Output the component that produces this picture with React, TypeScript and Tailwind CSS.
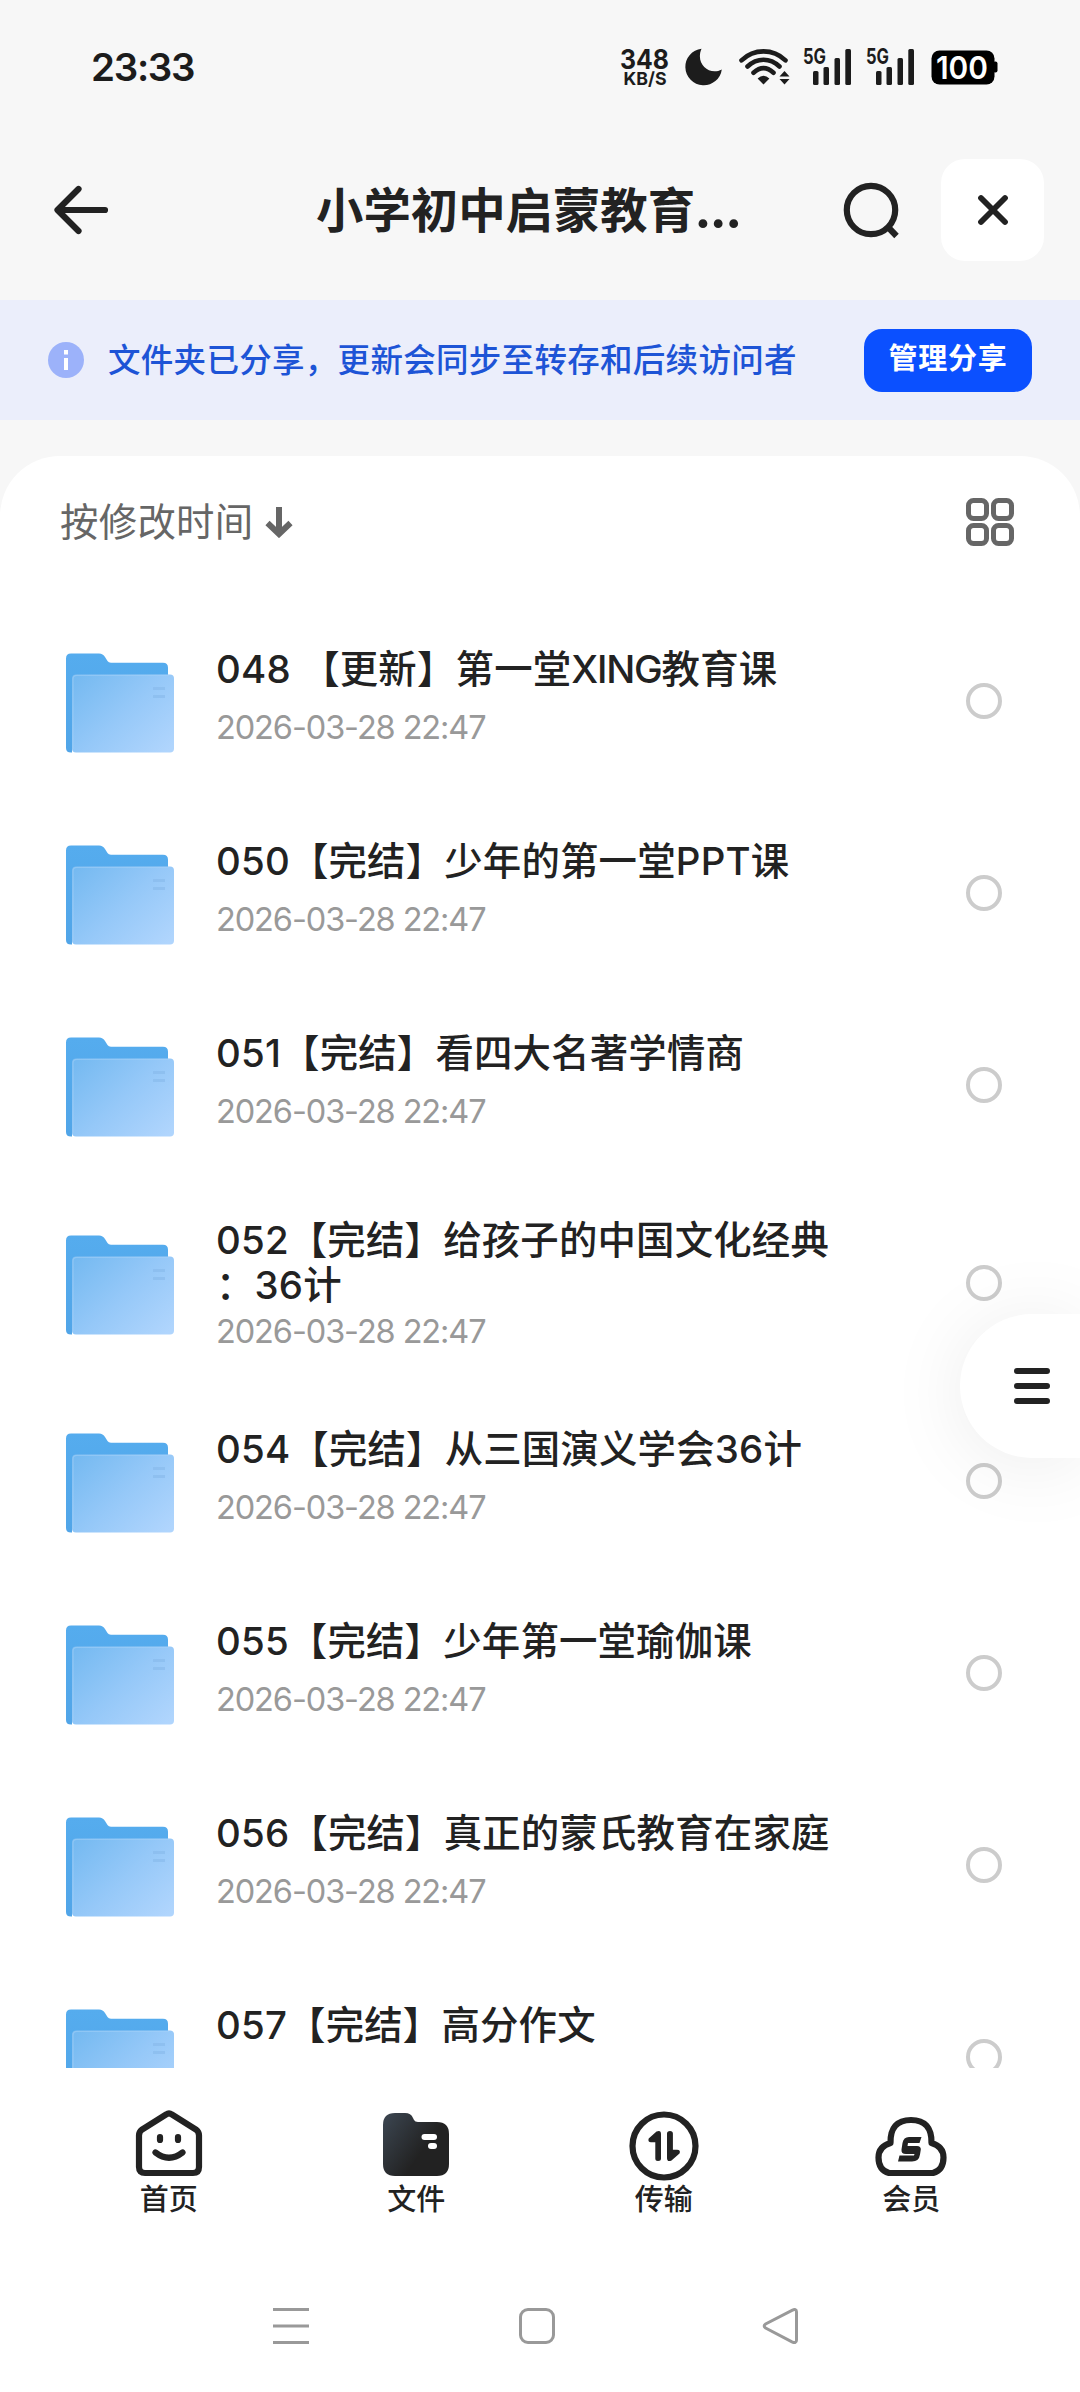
import type { ReactNode } from "react";

type Folder = { lines: string[]; date: string };

const folders: Folder[] = [
  { lines: ["048 【更新】第一堂XING教育课"], date: "2026-03-28 22:47" },
  { lines: ["050【完结】少年的第一堂PPT课"], date: "2026-03-28 22:47" },
  { lines: ["051【完结】看四大名著学情商"], date: "2026-03-28 22:47" },
  { lines: ["052【完结】给孩子的中国文化经典", "：36计"], date: "2026-03-28 22:47" },
  { lines: ["054【完结】从三国演义学会36计"], date: "2026-03-28 22:47" },
  { lines: ["055【完结】少年第一堂瑜伽课"], date: "2026-03-28 22:47" },
  { lines: ["056【完结】真正的蒙氏教育在家庭"], date: "2026-03-28 22:47" },
  { lines: ["057【完结】高分作文"], date: "2026-03-28 22:47" },
];

function Signal() {
  return (
    <svg width="49" height="38" viewBox="0 0 49 38" className="shrink-0 overflow-visible">
      <text x="0" y="16" fontSize="21.5" fontWeight="700" textLength="23" lengthAdjust="spacingAndGlyphs" fill="#1c1c1c">
        5G
      </text>
      <g fill="#1c1c1c">
        <rect x="10" y="23" width="5.5" height="14" rx="1.5" />
        <rect x="20.5" y="19" width="5.5" height="18" rx="1.5" />
        <rect x="31.5" y="10" width="5.5" height="27" rx="1.5" />
        <rect x="42.3" y="1" width="5.7" height="36" rx="1.5" />
      </g>
    </svg>
  );
}

function StatusBar() {
  return (
    <div className="flex h-[134px] items-center justify-between pr-[82px] pl-[91px] text-[#1c1c1c]">
      <div className="text-[38.5px] leading-[48px] font-semibold tracking-[-1.3px]">23:33</div>
      <div className="flex items-center">
        <svg width="50" height="38" viewBox="0 0 50 38" fill="#1c1c1c" className="overflow-visible">
          <text x="0" y="20.5" fontSize="26.5" fontWeight="700" textLength="49" lengthAdjust="spacingAndGlyphs">
            348
          </text>
          <text x="3.5" y="36.5" fontSize="18" fontWeight="700" textLength="43" lengthAdjust="spacingAndGlyphs">
            KB/S
          </text>
        </svg>
        <svg width="37" height="38" viewBox="0 0 37 38" className="ml-[15px]">
          <path d="M16.5.8A18.3 18.3 0 1 0 36.8 21.4C24.5 28 10 16 16.5.8Z" fill="#1c1c1c" />
        </svg>
        <svg width="51" height="38" viewBox="0 0 51 38" className="ml-[17px]" fill="none" stroke="#1c1c1c" strokeWidth="4.6" strokeLinecap="round">
          <path d="M2.5 12.3C15 .4 34 .4 46.5 12.3" />
          <path d="M8.5 18.5C18 9.5 31 9.5 40.5 18.5" />
          <path d="M14.5 24.7C21 18.8 28 18.8 34.5 24.7" />
          <path d="M24.5 36.5L18.6 30.6Q24.5 25 30.4 30.6Z" fill="#1c1c1c" stroke="none" />
          <path d="M45.5 23L50.5 28.5H40.5ZM45.5 36.5L50.5 31H40.5Z" fill="#1c1c1c" stroke="none" />
        </svg>
        <div className="ml-[13px] flex gap-[14px]">
          <Signal />
          <Signal />
        </div>
        <svg width="67" height="38" viewBox="0 0 67 38" className="ml-[16px] overflow-visible">
          <rect x="0.5" y="2.5" width="63" height="34" rx="8" fill="#000" />
          <rect x="62" y="13.5" width="4.5" height="11" rx="2" fill="#000" />
          <text x="5" y="30.5" fontSize="31" fontWeight="600" textLength="52" lengthAdjust="spacingAndGlyphs" fill="#fff">
            100
          </text>
        </svg>
      </div>
    </div>
  );
}

function Header() {
  return (
    <header className="flex h-[166px] items-start pr-[36px] pl-[54px]">
      <svg width="56" height="56" viewBox="0 0 56 56" className="mt-[48px] shrink-0" fill="none" stroke="#222" strokeWidth="6.2" strokeLinecap="round" strokeLinejoin="round">
        <path d="M51 28H4M24.5 7L3.5 28L24.5 49" />
      </svg>
      <h1 className="mt-[43px] ml-[206px] w-[440px] text-[47.4px] leading-[68px] font-bold whitespace-nowrap text-[#222]">
        小学初中启蒙教育<span className="-ml-[1px] text-[52px] leading-none tracking-[-2px]">...</span>
      </h1>
      <div className="flex flex-1 justify-end">
        <svg width="60" height="60" viewBox="0 0 60 60" className="mt-[46px] mr-[39px]" fill="none" stroke="#222" strokeWidth="6.2">
          <circle cx="29" cy="30" r="24.2" />
          <path d="M44.5 45.5L54.5 56" />
        </svg>
        <div className="mt-[25px] flex h-[102px] w-[103px] items-center justify-center rounded-[24px] bg-white">
          <svg width="32" height="32" viewBox="0 0 32 32" stroke="#222" strokeWidth="5.8" strokeLinecap="round">
            <path d="M4 4L28 28M28 4L4 28" />
          </svg>
        </div>
      </div>
    </header>
  );
}

function ShareBanner() {
  return (
    <div className="flex h-[120px] items-center bg-[#ebeefb] pr-[48px] pl-[48px]">
      <svg width="36" height="36" viewBox="0 0 36 36" className="shrink-0">
        <circle cx="18" cy="18" r="18" fill="#9cb2fa" />
        <path d="M16 8h4v4.5h-4zM16 16h4v12h-4z" fill="#fff" />
      </svg>
      <p className="ml-[24px] flex-1 pt-[2px] text-[32.5px] leading-[48px] font-medium tracking-[0.3px] whitespace-nowrap text-[#1d54d6]">
        文件夹已分享，更新会同步至转存和后续访问者
      </p>
      <button className="h-[63px] w-[168px] rounded-[18px] bg-[#0b50ff] pb-[3px] text-[29px] font-bold tracking-[0.8px] text-white">
        管理分享
      </button>
    </div>
  );
}

function SortBar() {
  return (
    <div className="flex h-[132px] shrink-0 items-center justify-between pr-[66px] pl-[60px]">
      <div className="flex items-center gap-[12px] text-[38.4px] tracking-[0.3px] text-[#666]">
        <span className="pt-[2px]">按修改时间</span>
        <svg width="28" height="32" viewBox="0 0 28 32" fill="none" stroke="#666" strokeWidth="6">
          <path d="M14 1V27M2.5 17L14 28L25.5 17" />
        </svg>
      </div>
      <svg width="48" height="48" viewBox="0 0 48 48" fill="none" stroke="#666" strokeWidth="5">
        <rect x="2.5" y="2.5" width="18" height="18" rx="5" />
        <rect x="27.5" y="2.5" width="18" height="18" rx="5" />
        <rect x="2.5" y="27.5" width="18" height="18" rx="5" />
        <rect x="27.5" y="27.5" width="18" height="18" rx="5" />
      </svg>
    </div>
  );
}

function FolderIcon() {
  return (
    <svg width="108" height="100" viewBox="0 0 108 100" className="shrink-0">
      <defs>
        <linearGradient id="folderBack" x1="0" y1="0" x2="0" y2="1">
          <stop offset="0" stopColor="#55acee" />
          <stop offset="1" stopColor="#51a5e8" />
        </linearGradient>
        <linearGradient id="folderFront" x1="0" y1="0.1" x2="1" y2="0.9">
          <stop offset="0" stopColor="#76baf1" />
          <stop offset="0.5" stopColor="#95c8f8" />
          <stop offset="1" stopColor="#b0d5fd" />
        </linearGradient>
      </defs>
      <path d="M0 5.5Q0 .5 5 .5H33Q37 .5 39 4L41.5 8Q42.5 9.7 45 9.7H97Q102 9.7 102 14.7V90H6V99.5H5Q0 99.5 0 95Z" fill="url(#folderBack)" />
      <rect x="6" y="21.5" width="102" height="78" rx="4" fill="url(#folderFront)" />
      <path d="M7 96V26Q7 22.3 11 22.3H103" fill="none" stroke="#a5d2f8" strokeWidth="1.3" opacity=".5" />
      <path d="M87 35.5H99M87 43.5H99" stroke="#86b8ea" strokeWidth="3" opacity=".55" />
    </svg>
  );
}

function Title({ text }: { text: string }) {
  return (
    <div>
      {text.split(/([A-Z]{4,})/).map((part, i) =>
        i % 2 ? (
          <span key={i} className="tracking-[-1.2px]">
            {part}
          </span>
        ) : (
          part
        ),
      )}
    </div>
  );
}

function FolderRow({ folder }: { folder: Folder }) {
  const wrapped = folder.lines.length > 1;
  return (
    <li className={wrapped ? "flex h-[204px] shrink-0 items-center pr-[78px] pl-[66px]" : "flex h-[192px] shrink-0 items-center pr-[78px] pl-[66px]"}>
      <FolderIcon />
      <div className={wrapped ? "ml-[42px] flex-1 pt-[2px]" : "ml-[42px] flex-1 pb-[8px]"}>
        <div className="text-[38.4px] leading-[45px] font-medium tracking-[0.2px] whitespace-nowrap text-[#222]">
          {folder.lines.map((line) => (
            <Title key={line} text={line} />
          ))}
        </div>
        <div className={wrapped ? "mt-[1px] text-[32.5px] leading-[46px] tracking-[-1.1px] text-[#999]" : "mt-[13px] text-[32.5px] leading-[46px] tracking-[-1.1px] text-[#999]"}>
          {folder.date}
        </div>
      </div>
      <div className="mb-[4px] size-[36px] rounded-full border-[4px] border-[#ccc]" />
    </li>
  );
}

function Tab({ label, children }: { label: string; children: ReactNode }) {
  return (
    <div className="flex flex-col items-center">
      <svg width="76" height="76" viewBox="0 0 76 76">
        {children}
      </svg>
      <span className="mt-[-2px] text-[29px] leading-[36px] font-medium text-[#222]">{label}</span>
    </div>
  );
}

function TabBar() {
  return (
    <nav className="grid h-[172px] grid-cols-4 bg-white px-[45px] pt-[40px]">
      <Tab label="首页">
        <g fill="none" stroke="#222" strokeWidth="6.2" strokeLinecap="round">
          <path d="M35.2 6.4Q38 4.3 40.8 6.4L65 21.5Q68 23.6 68 27.5V59Q68 65 62 65H14Q8 65 8 59V27.5Q8 23.6 11 21.5Z" />
          <path d="M24.5 44.5Q38 55 51.5 44.5" />
          <path d="M29 29V32M47 29V32" />
        </g>
      </Tab>
      <Tab label="文件">
        <defs>
          <linearGradient id="tabFolder" x1="0" y1="0.2" x2="0.6" y2="0.6">
            <stop offset="0" stopColor="#39424c" />
            <stop offset="1" stopColor="#222" />
          </linearGradient>
        </defs>
        <path d="M5 17Q5 5 17 5H27Q33 5 35 10L36 12Q37 14 40 14H59Q71 14 71 26V56Q71 68 59 68H17Q5 68 5 56Z" fill="url(#tabFolder)" />
        <rect x="43.5" y="26" width="15.5" height="6" rx="3" fill="#fff" />
        <rect x="50" y="35" width="9" height="6" rx="3" fill="#fff" />
      </Tab>
      <Tab label="传输">
        <circle cx="38" cy="38" r="31.5" fill="none" stroke="#222" strokeWidth="6.2" />
        <path d="M22.7 30.5L30.5 23.5Q35 21.5 35 26V50.5Q35 53 32 53Q29.3 53 29.3 50.5V34.2H25Q21.5 34 22.7 30.5Z" fill="#222" />
        <path d="M53.5 45.5L45.5 52.5Q41 54.5 41 50V25.5Q41 23 44 23Q46.9 23 46.9 25.5V41.8H51Q55 42 53.5 45.5Z" fill="#222" />
      </Tab>
      <Tab label="会员">
        <path d="M16 65Q5.5 62 5.5 49.5Q5.5 38.5 17.5 35Q17 12 38 12Q59 12 58.5 35Q70.5 38.5 70.5 49.5Q70.5 62 60 65Z" fill="none" stroke="#222" strokeWidth="6.2" strokeLinejoin="round" />
        <path d="M48.5 29H36Q30.5 29 29.5 35L28.5 41.5Q28 46 33 46H41.5L41 47.5H26.5L25 53.5H39Q46 53.5 47 46.5L47.8 41.5Q48 38 44 38H34.5L35 35H46.5Z" fill="#222" />
      </Tab>
    </nav>
  );
}

function SystemNav() {
  return (
    <div className="flex h-[152px] items-start bg-white pt-[67px] pl-[272px]">
      <svg width="38" height="38" viewBox="0 0 38 38" stroke="#999" strokeWidth="3">
        <path d="M1 2.5H37M1 19H37M1 35.5H37" />
      </svg>
      <svg width="38" height="38" viewBox="0 0 38 38" className="ml-[208px]" fill="none" stroke="#999" strokeWidth="3">
        <rect x="2.5" y="2.5" width="33" height="33" rx="7.5" />
      </svg>
      <svg width="38" height="38" viewBox="0 0 38 38" className="ml-[206px]" fill="none" stroke="#999" strokeWidth="3">
        <path d="M3.6 17Q.8 19 3.6 21L30 34.8Q34.5 37 34.5 33V5Q34.5 1.2 30 3.4Z" />
      </svg>
    </div>
  );
}

export default function App() {
  return (
    <div className="relative flex h-[2392px] w-[1080px] flex-col overflow-hidden bg-[#f7f7f7] font-['Inter','Noto_Sans_CJK_SC',sans-serif]">
      <StatusBar />
      <Header />
      <ShareBanner />
      <main className="mt-[36px] flex h-[1612px] flex-col overflow-hidden rounded-t-[60px] bg-white">
        <SortBar />
        <ul className="mt-[19px] flex flex-col">
          {folders.map((folder) => (
            <FolderRow key={folder.lines[0]} folder={folder} />
          ))}
        </ul>
      </main>
      <TabBar />
      <SystemNav />
      <button className="absolute top-[1314px] right-0 flex h-[144px] w-[120px] items-center rounded-l-full bg-white pl-[54px] shadow-[0_6px_80px_rgba(0,0,0,0.08)]">
        <svg width="36" height="36" viewBox="0 0 36 36" stroke="#222" strokeWidth="6" strokeLinecap="round">
          <path d="M3 3H33M3 18H33M3 33H33" />
        </svg>
      </button>
    </div>
  );
}
